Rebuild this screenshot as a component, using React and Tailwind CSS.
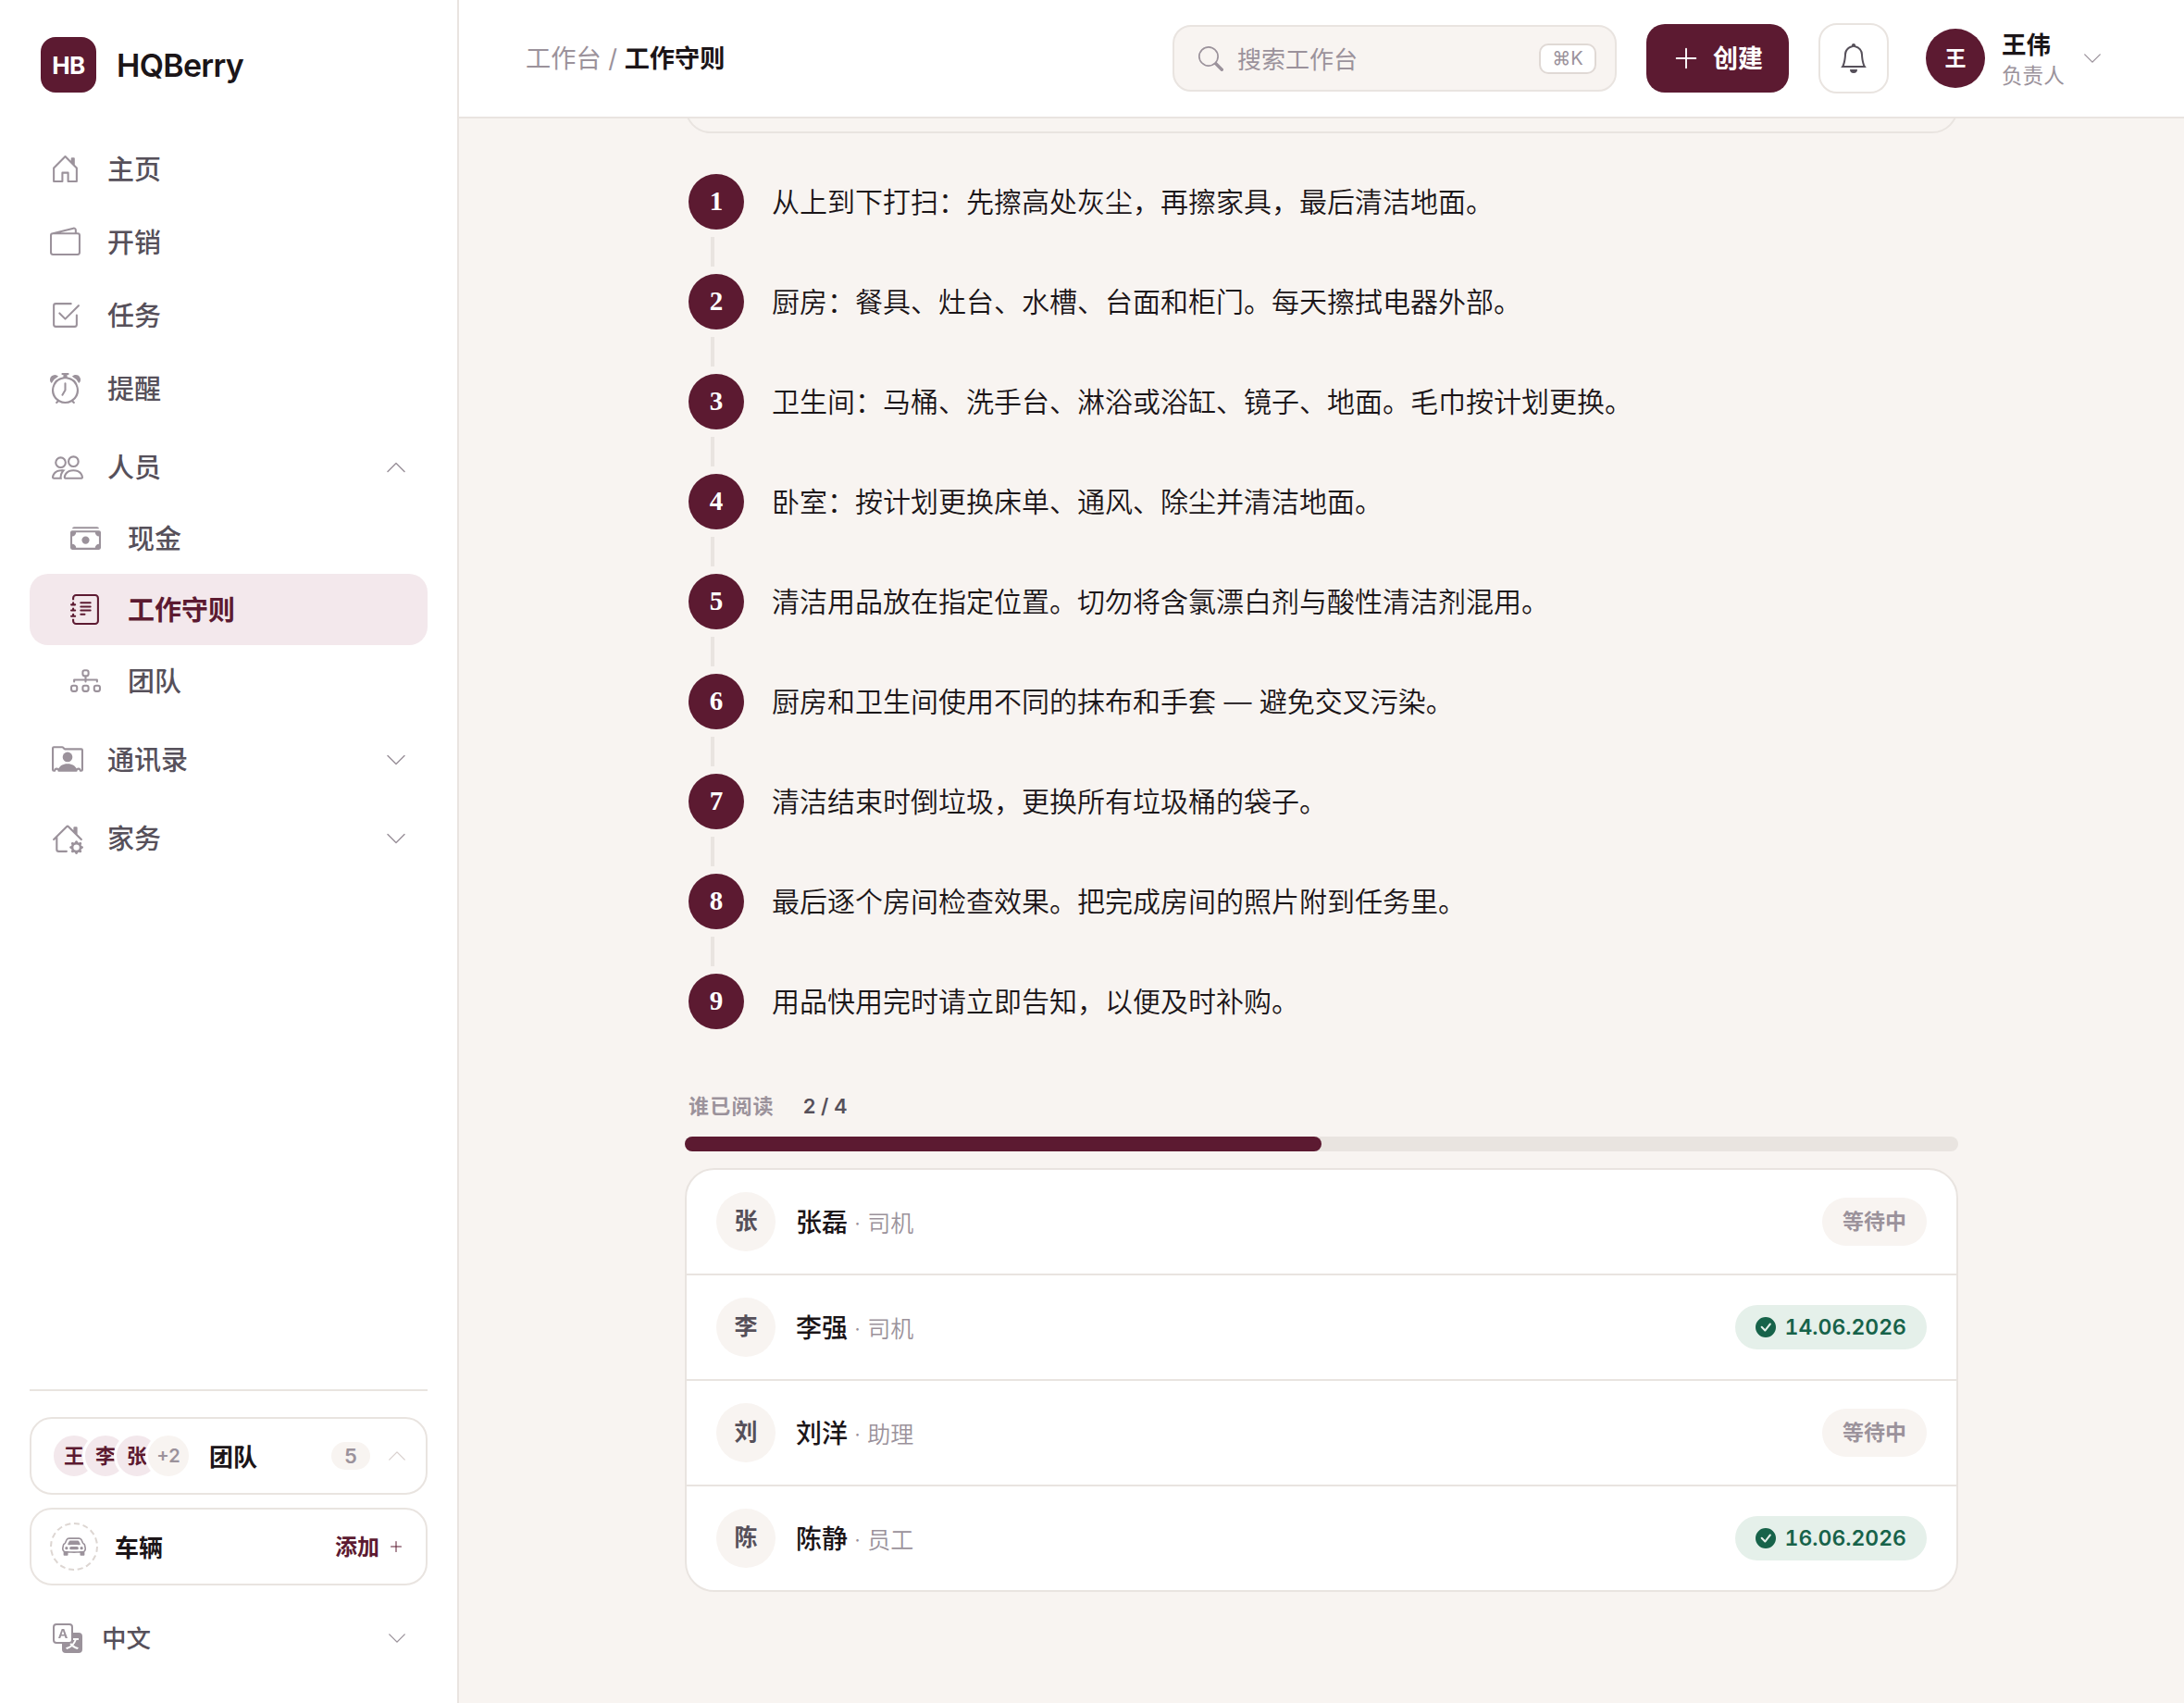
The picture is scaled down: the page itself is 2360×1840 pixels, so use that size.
import {
  BsAlarm,
  BsBell,
  BsCarFront,
  BsCashStack,
  BsCheck2Square,
  BsCheckCircleFill,
  BsChevronDown,
  BsChevronUp,
  BsDiagram3,
  BsHouseDoor,
  BsHouseGear,
  BsJournalText,
  BsPeople,
  BsPersonRolodex,
  BsPlusLg,
  BsSearch,
  BsTranslate,
  BsWallet2,
} from "react-icons/bs";

const mainNav = [
  { label: "主页", icon: BsHouseDoor },
  { label: "开销", icon: BsWallet2 },
  { label: "任务", icon: BsCheck2Square },
  { label: "提醒", icon: BsAlarm },
];

const peopleNav = [
  { label: "现金", icon: BsCashStack },
  { label: "工作守则", icon: BsJournalText, active: true },
  { label: "团队", icon: BsDiagram3 },
];

const steps = [
  "从上到下打扫：先擦高处灰尘，再擦家具，最后清洁地面。",
  "厨房：餐具、灶台、水槽、台面和柜门。每天擦拭电器外部。",
  "卫生间：马桶、洗手台、淋浴或浴缸、镜子、地面。毛巾按计划更换。",
  "卧室：按计划更换床单、通风、除尘并清洁地面。",
  "清洁用品放在指定位置。切勿将含氯漂白剂与酸性清洁剂混用。",
  "厨房和卫生间使用不同的抹布和手套 — 避免交叉污染。",
  "清洁结束时倒垃圾，更换所有垃圾桶的袋子。",
  "最后逐个房间检查效果。把完成房间的照片附到任务里。",
  "用品快用完时请立即告知，以便及时补购。",
];

const readers = [
  { name: "张磊", role: "司机", date: null },
  { name: "李强", role: "司机", date: "14.06.2026" },
  { name: "刘洋", role: "助理", date: null },
  { name: "陈静", role: "员工", date: "16.06.2026" },
];

function NavGroup({ label, icon: Icon, open }) {
  const Chevron = open ? BsChevronUp : BsChevronDown;
  return (
    <div className="flex h-[77px] items-center pl-6 pr-[22px]">
      <Icon className="size-[34px] text-[#9b929b]" />
      <span className="ml-[26px] flex-1 pt-0.5">{label}</span>
      <Chevron className="size-6 text-[#9b929b]" />
    </div>
  );
}

function Sidebar() {
  return (
    <aside className="flex w-[496px] shrink-0 flex-col border-r-2 border-[#e9e4e0] bg-white px-8 text-[29px] font-medium text-[#56505a]">
      {/* brand */}
      <div className="mt-10 flex h-[60px] items-center pl-3">
        <div className="flex size-[60px] items-center justify-center rounded-[16px] bg-[#5c1a31] text-[26px] font-bold tracking-[-0.5px] text-white">
          HB
        </div>
        <span className="ml-[22px] text-[34px] font-semibold tracking-[-0.7px] text-[#1b1518]">HQBerry</span>
      </div>

      <nav className="mt-[43px]">
        {mainNav.map(({ label, icon: Icon }) => (
          <div key={label} className="flex h-[79px] items-center pl-[22px]">
            <Icon className="size-[33px] text-[#9b929b]" />
            <span className="ml-[29px] pt-0.5">{label}</span>
          </div>
        ))}

        <div className="mt-[7px]">
          <NavGroup label="人员" icon={BsPeople} open />
        </div>
        {peopleNav.map(({ label, icon: Icon, active }) => (
          <div
            key={label}
            className={
              active
                ? "flex h-[77px] items-center rounded-[20px] bg-[#f3e8ec] pl-11 font-semibold text-[#5c1a31]"
                : "flex h-[77px] items-center pl-11"
            }
          >
            <Icon className={active ? "size-[33px]" : "size-[33px] text-[#9b929b]"} />
            <span className="ml-[29px] pt-0.5">{label}</span>
          </div>
        ))}
        <div className="mt-2">
          <NavGroup label="通讯录" icon={BsPersonRolodex} />
        </div>
        <div className="mt-2">
          <NavGroup label="家务" icon={BsHouseGear} />
        </div>
      </nav>

      {/* footer */}
      <div className="mt-auto border-t-2 border-[#e9e4e0] pt-7 pb-7">
        <div className="flex h-[84px] items-center rounded-[24px] border-2 border-[#e9e4e0] pl-[21px] pr-5 text-[26px]">
          <div className="flex -space-x-4 text-[22px] font-semibold text-[#5c1a31]">
            {["王", "李", "张"].map((c) => (
              <span key={c} className="box-content flex size-11 items-center justify-center rounded-full border-3 border-white bg-[#f3e8ec]">
                {c}
              </span>
            ))}
            <span className="box-content flex size-11 items-center justify-center rounded-full border-3 border-white bg-[#f8f4f1] text-[20px] text-[#9b929b]">
              +2
            </span>
          </div>
          <span className="ml-[19px] flex-1 pt-0.5 font-semibold text-[#1b1518]">团队</span>
          <span className="flex h-[30px] w-[42px] items-center justify-center rounded-full bg-[#f8f4f1] text-[22px] font-semibold text-[#9b929b]">
            5
          </span>
          <BsChevronUp className="ml-[18px] size-[22px] text-[#d9d1cf]" />
        </div>

        <div className="mt-[14px] flex h-[84px] items-center rounded-[24px] border-2 border-[#e9e4e0] pl-5 pr-6 text-[26px]">
          <span className="flex size-[52px] items-center justify-center rounded-full border-2 border-dashed border-[#ddd6d2]">
            <BsCarFront className="size-[26px] text-[#9b929b]" />
          </span>
          <span className="ml-[18px] flex-1 pt-0.5 font-semibold text-[#1b1518]">车辆</span>
          <span className="pt-0.5 text-[24px] font-semibold text-[#5c1a31]">添加</span>
          <BsPlusLg className="ml-[10px] size-4 text-[#5c1a31]" />
        </div>

        <div className="mt-[15px] flex h-[84px] items-center pl-[25px] pr-[22px] text-[26.5px]">
          <BsTranslate className="size-8 text-[#9b929b]" />
          <span className="ml-[21px] flex-1 pt-0.5">中文</span>
          <BsChevronDown className="size-[22px] text-[#9b929b]" />
        </div>
      </div>
    </aside>
  );
}

function TopBar() {
  return (
    <header className="flex h-32 shrink-0 items-center border-b-2 border-[#e9e4e0] bg-white pl-[72px] pr-[88px]">
      <div className="flex-1 pt-0.5 text-[27.2px] text-[#9b929b]">
        工作台 / <span className="font-semibold text-[#1b1518]">工作守则</span>
      </div>

      <div className="flex h-18 w-[480px] items-center rounded-[20px] border-2 border-[#e9e4e0] bg-[#f8f4f1] pl-[26px] pr-5 text-[26px] text-[#9b929b]">
        <BsSearch className="size-[27px]" />
        <span className="ml-[15px] flex-1 pt-0.5">搜索工作台</span>
        <span className="flex h-[33px] w-[62px] items-center justify-center rounded-[10px] border-2 border-[#e0d9d5] bg-white text-[20px]">
          ⌘K
        </span>
      </div>

      <button className="ml-8 flex h-[74px] w-[154px] items-center justify-center rounded-[20px] bg-[#5c1a31] text-[27px] font-semibold text-white">
        <BsPlusLg className="mr-[14px] size-[30px]" />
        <span className="pt-0.5">创建</span>
      </button>

      <button className="ml-8 flex size-[76px] items-center justify-center rounded-[20px] border-2 border-[#e9e4e0]">
        <BsBell className="size-8 text-[#56505a]" />
      </button>

      <div className="ml-10 flex items-center">
        <span className="flex size-16 items-center justify-center rounded-full bg-[#5c1a31] text-[23px] font-semibold text-white">
          王
        </span>
        <div className="ml-[18px] w-[66px] pt-1 whitespace-nowrap">
          <div className="text-[26.5px] leading-[34px] font-semibold text-[#1b1518]">王伟</div>
          <div className="text-[22.6px] leading-[34px] text-[#9b929b]">负责人</div>
        </div>
        <BsChevronDown className="ml-[21px] size-[22px] text-[#9b929b]" />
      </div>
    </header>
  );
}

function Steps() {
  return (
    <ol>
      {steps.map((text, i) => (
        <li key={text} className="flex h-[108px]">
          <div className="w-[60px] shrink-0">
            <div className="flex size-[60px] items-center justify-center rounded-full bg-[#5c1a31] font-[Liberation_Serif,serif] text-[29px] font-bold text-white">
              {i + 1}
            </div>
            {i < steps.length - 1 && <div className="mt-2 ml-6 h-8 w-1 bg-[#e9e4e0]" />}
          </div>
          <p className="ml-[30px] text-[30px] leading-[60px] font-[350] text-[#1b1518]">{text}</p>
        </li>
      ))}
    </ol>
  );
}

function ReaderRow({ name, role, date }) {
  return (
    <div className="flex h-[114px] items-center border-b-2 border-[#e9e4e0] px-8 last:h-28 last:border-b-0">
      <span className="flex size-16 items-center justify-center rounded-full bg-[#f8f4f1] text-[25px] font-semibold text-[#56505a]">
        {name[0]}
      </span>
      <div className="ml-[22px] flex-1 pt-0.5 text-[28px] font-medium text-[#1b1518]">
        {name}
        <span className="text-[25px] font-[350] text-[#9b929b]"> · {role}</span>
      </div>
      {date ? (
        <span className="flex h-12 items-center rounded-full bg-[#e5f0ea] px-[22px] text-[23px] font-semibold text-[#17634a] tabular-nums">
          <BsCheckCircleFill className="mr-[10px] size-[22px]" />
          {date}
        </span>
      ) : (
        <span className="flex h-[52px] items-center rounded-full bg-[#f8f4f1] px-[22px] text-[23px] font-semibold text-[#9b929b]">
          等待中
        </span>
      )}
    </div>
  );
}

export default function App() {
  return (
    <div className="flex h-[1840px] w-[2360px] overflow-hidden bg-[#f8f4f1] font-[Inter,Noto_Sans_CJK_SC,sans-serif]">
      <Sidebar />
      <div className="flex min-w-0 flex-1 flex-col">
        <TopBar />
        <main className="mx-auto w-[1376px]">
          {/* bottom edge of the card scrolled under the header */}
          <div className="h-4 overflow-hidden">
            <div className="-mt-[60px] h-[76px] rounded-[28px] border-2 border-[#e9e4e0]" />
          </div>
          <div className="mt-11 pl-1">
            <Steps />
          </div>

          <div className="mt-[19px] flex h-8 items-center pl-1 text-[22px] font-semibold">
            <span className="tracking-[1.2px] text-[#9b929b]">谁已阅读</span>
            <span className="ml-[31px] text-[#56505a]">2 / 4</span>
          </div>
          <div className="mt-[17px] h-4 rounded-full bg-[#e9e4e0]">
            <div className="h-4 w-1/2 rounded-full bg-[#5c1a31]" />
          </div>
          <div className="mt-[18px] overflow-hidden rounded-[32px] border-2 border-[#e9e4e0] bg-white">
            {readers.map((r) => (
              <ReaderRow key={r.name} {...r} />
            ))}
          </div>
        </main>
      </div>
    </div>
  );
}
